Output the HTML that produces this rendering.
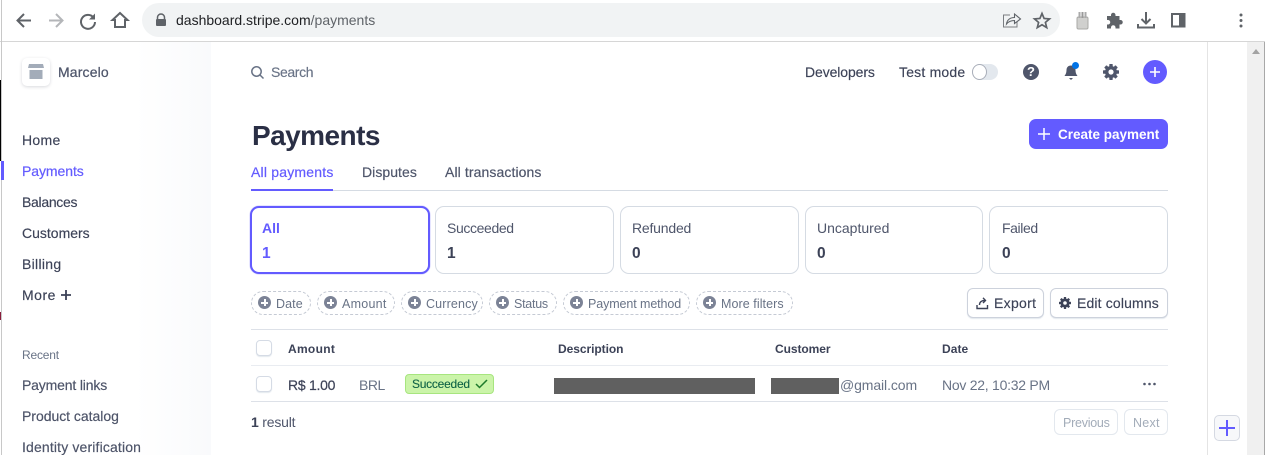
<!DOCTYPE html>
<html><head><meta charset="utf-8"><style>
*{box-sizing:border-box}
html,body{margin:0;padding:0;width:1265px;height:455px;overflow:hidden;background:#fff}
body{position:relative;font-family:"Liberation Sans",sans-serif;font-size:14px;color:#3c4257}
.t{position:absolute;white-space:nowrap;line-height:18px;letter-spacing:.3px}
.b{position:absolute}
.n{color:#3c4257;left:22px;-webkit-text-stroke:.15px #3c4257}
.card{position:absolute;top:206px;height:68px;border:1px solid #d5dbe3;border-radius:9px;background:#fff}
.pill{position:absolute;top:291px;height:24px;border:1px dashed #c5cad4;border-radius:12px}
.pl{position:absolute;top:296px;width:13px;height:13px;border-radius:50%;background:#7c8396}
.pl:before{content:"";position:absolute;left:3px;top:5.5px;width:7px;height:2px;background:#fff}
.pl:after{content:"";position:absolute;left:5.5px;top:3px;width:2px;height:7px;background:#fff}
.pt{top:295px;font-size:12.5px;color:#697386;letter-spacing:.1px}
.btn{position:absolute;border:1px solid #cdd2dc;border-radius:6px;background:#fff}
.chk{position:absolute;left:256px;width:16px;height:16px;border:1px solid #d5dbe5;border-radius:4px;box-shadow:0 1px 1px #e3e8ee;background:#fff}
.num{font-weight:700;font-size:15.5px;top:245px;letter-spacing:0}
svg{position:absolute;overflow:visible}
</style></head><body>
<!-- browser frame -->
<div class="b" style="left:0;top:41px;width:1265px;height:1px;background:#d6d6d6"></div>
<div class="b" style="left:1px;top:0;width:1px;height:455px;background:#c8c8c8"></div>
<div class="b" style="left:0;top:80px;width:1px;height:81px;background:#000"></div>
<div class="b" style="left:0;top:312px;width:1px;height:8px;background:#8a1d3c"></div>
<div class="b" style="left:142px;top:3px;width:918px;height:34px;border-radius:17px;background:#f1f3f4"></div>
<svg style="left:0;top:0" width="140" height="40" fill="none">
<path d="M31 20.5H18M24 14l-6.500 6.500L24 27" stroke="#5f6368" stroke-width="2"/>
<path d="M49 20.500H62M56 14l6.500 6.500L56 27" stroke="#b4b6b9" stroke-width="2"/>
<path d="M93.500 17.500A7 7 0 1 0 95 22" stroke="#5f6368" stroke-width="2"/><path d="M95 13.500v6h-6z" fill="#5f6368"/>
<path d="M120 13l-7.500 7H115v7h10v-7h2.500z" stroke="#5f6368" stroke-width="2" stroke-linejoin="miter"/>
</svg>
<svg style="left:155px;top:13px" width="12" height="14"><path d="M2.500 6V4.500a3.500 3.500 0 0 1 7 0V6" fill="none" stroke="#5f6368" stroke-width="1.500"/><rect x="1" y="6" width="10" height="7" rx="1" fill="#5f6368"/></svg>
<div class="t" style="left:176px;top:11px;font-size:14px;letter-spacing:0;color:#202124">dashboard.stripe.com<span style="color:#5f6368">/payments</span></div>
<svg style="left:1000px;top:10px" width="50" height="20" fill="none">
<path d="M10 5H3.500v12H17v-5" stroke="#7a7d81" stroke-width="1"/><path d="M6.500 14c.5-4 3.500-6.500 8-6.500V4l6 5-6 4.500V10.500c-3.500 0-6 1-8 3.500z" stroke="#5f6368" stroke-width="1.100"/>
<path d="M42 3.500l2.100 5 5.400.4-4.100 3.500 1.300 5.200-4.700-2.800-4.700 2.800 1.300-5.200-4.100-3.500 5.400-.4z" stroke="#5f6368" stroke-width="1.700"/>
</svg>
<svg style="left:1074px;top:11px" width="16" height="18"><rect x="3" y="6" width="11" height="12" rx="1.500" fill="#d0d0ce" stroke="#aaaaa7"/><rect x="4.500" y="1" width="2" height="6" fill="#aaa"/><rect x="7.500" y="1" width="2" height="6" fill="#999"/><rect x="10.500" y="1" width="2" height="6" fill="#aaa"/></svg>
<svg style="left:1105px;top:11px" width="18" height="18"><path d="M2 5h4V4a2.200 2.200 0 0 1 4.500 0v1h4v4h1a2.200 2.200 0 0 1 0 4.500h-1v4h-4v-1a2.200 2.200 0 0 0-4.500 0v1H2v-4h1a2.200 2.200 0 0 0 0-4.500H2z" fill="#5f6368"/></svg>
<svg style="left:1137px;top:11px" width="18" height="18" fill="none" stroke="#5f6368" stroke-width="2"><path d="M9 1v11M4.500 8L9 12.500 13.500 8M1 13v3.500h16V13"/></svg>
<svg style="left:1171px;top:13px" width="15" height="15"><rect x="1" y="1" width="12.500" height="12.500" fill="none" stroke="#5f6368" stroke-width="2"/><rect x="8" y="1" width="6" height="13" fill="#5f6368"/></svg>
<svg style="left:1238px;top:13px" width="6" height="16"><circle cx="3" cy="2" r="1.500" fill="#5f6368"/><circle cx="3" cy="7.500" r="1.500" fill="#5f6368"/><circle cx="3" cy="13" r="1.500" fill="#5f6368"/></svg>
<!-- right rail / scrollbar -->
<div class="b" style="left:1207px;top:42px;width:1px;height:413px;background:#e4e4e4"></div>
<div class="b" style="left:1247px;top:42px;width:17px;height:413px;background:#f0f0f0"></div>
<div class="b" style="left:1264px;top:42px;width:1px;height:413px;background:#a8a8a8"></div>
<svg style="left:1252px;top:49px" width="8" height="5"><path d="M0 5L4 0l4 5z" fill="#a3a3a3"/></svg>
<div class="b" style="left:1214px;top:415px;width:26px;height:26px;border:1px solid #d5d9e2;border-radius:5px;background:#f7f8fa"></div>
<svg style="left:1219px;top:420px" width="16" height="16"><path d="M0 8h16M8 0v16" stroke="#635bff" stroke-width="2"/></svg>
<!-- sidebar -->
<div class="b" style="left:60px;top:42px;width:151px;height:413px;background:linear-gradient(90deg,#fff 0%,#fff 50%,#f9fafc 100%)"></div>
<div class="b" style="left:22px;top:58px;width:28px;height:28px;border-radius:5px;background:#fff;box-shadow:0 1px 3px rgba(60,66,87,.2)"></div>
<svg style="left:28px;top:64px" width="16" height="16"><path d="M1 0h14l1 4H0z" fill="#a3acb9"/><rect x="1.500" y="6" width="13" height="9" fill="#a3acb9"/></svg>
<div class="t" style="left:58px;top:63px;color:#4f566b;letter-spacing:.15px;-webkit-text-stroke:.25px #4f566b">Marcelo</div>
<div class="t n" style="top:131px">Home</div>
<div class="b" style="left:1px;top:161px;width:3px;height:19px;background:#635bff"></div>
<div class="t n" style="top:162px;color:#635bff;letter-spacing:-.07px;-webkit-text-stroke:.2px #635bff">Payments</div>
<div class="t n" style="top:193px;letter-spacing:-.3px">Balances</div>
<div class="t n" style="top:224px;letter-spacing:0">Customers</div>
<div class="t n" style="top:255px">Billing</div>
<div class="t n" style="top:286px;letter-spacing:.5px">More</div>
<svg style="left:61px;top:290px" width="10" height="10"><path d="M0 5h10M5 0v10" stroke="#3c4257" stroke-width="1.800"/></svg>
<div class="t" style="left:22px;top:346px;font-size:12px;color:#697386;letter-spacing:-.2px">Recent</div>
<div class="t n" style="top:376px;color:#4f566b;letter-spacing:-.16px">Payment links</div>
<div class="t n" style="top:407px;color:#4f566b;letter-spacing:-.03px">Product catalog</div>
<div class="t n" style="top:438px;color:#4f566b;letter-spacing:.15px">Identity verification</div>
<!-- top bar -->
<svg style="left:251px;top:66px" width="13" height="13" fill="none" stroke="#697386" stroke-width="1.500"><circle cx="5.500" cy="5.500" r="4.700"/><path d="M9 9l3.500 3.500"/></svg>
<div class="t" style="left:271px;top:63px;color:#697386;letter-spacing:-.37px;-webkit-text-stroke:.15px #697386">Search</div>
<div class="t" style="left:805px;top:63px;color:#3c4257;letter-spacing:-.1px;-webkit-text-stroke:.15px #3c4257">Developers</div>
<div class="t" style="left:899px;top:63px;color:#3c4257;letter-spacing:.2px;-webkit-text-stroke:.15px #3c4257">Test mode</div>
<div class="b" style="left:972px;top:64px;width:26px;height:16px;border-radius:8px;background:#e3e8ee"></div>
<div class="b" style="left:972px;top:64px;width:15px;height:16px;border-radius:50%;background:#fff;border:1px solid #a9aeb9"></div>
<div class="b" style="left:1023px;top:64px;width:16px;height:16px;border-radius:50%;background:#4f566b"></div>
<div class="t" style="left:1023px;top:63px;width:16px;text-align:center;color:#fff;font-weight:700;font-size:13px;letter-spacing:0">?</div>
<svg style="left:1064px;top:64px" width="15" height="17"><path d="M7 1.500c-3 0-4.500 2-4.500 4.500 0 3-1 4.500-2 6h13c-1-1.500-2-3-2-6 0-2.500-1.500-4.500-4.500-4.500z" fill="#4f566b"/><path d="M5 14h4l-2 2z" fill="#4f566b"/></svg>
<div class="b" style="left:1072px;top:62px;width:7px;height:7px;border-radius:50%;background:#0073e6"></div>
<svg style="left:1103px;top:64px" width="16" height="16"><g fill="#4f566b"><circle cx="8" cy="8" r="6"/><rect x="6.300" y="0" width="3.400" height="16" rx=".6"/><rect x="6.300" y="0" width="3.400" height="16" rx=".6" transform="rotate(45 8 8)"/><rect x="6.300" y="0" width="3.400" height="16" rx=".6" transform="rotate(90 8 8)"/><rect x="6.300" y="0" width="3.400" height="16" rx=".6" transform="rotate(135 8 8)"/></g><circle cx="8" cy="8" r="2.600" fill="#fff"/></svg>
<div class="b" style="left:1143px;top:60px;width:24px;height:24px;border-radius:50%;background:#635bff"></div>
<svg style="left:1150px;top:67px" width="10" height="10"><path d="M0 5h10M5 0v10" stroke="#fff" stroke-width="1.600"/></svg>
<!-- header -->
<div class="t" style="left:252px;top:119px;font-size:28px;line-height:34px;font-weight:700;color:#2a2f45;letter-spacing:-.55px">Payments</div>
<div class="b" style="left:1029px;top:119px;width:139px;height:30px;border-radius:7px;background:#635bff"></div>
<svg style="left:1038px;top:128px" width="12" height="12"><path d="M0 6h12M6 0v12" stroke="#fff" stroke-width="1.500"/></svg>
<div class="t" style="left:1058px;top:126px;color:#fff;font-weight:700;font-size:13.500px;letter-spacing:0">Create payment</div>
<div class="t" style="left:251px;top:163px;color:#635bff;letter-spacing:.2px;-webkit-text-stroke:.2px #635bff">All payments</div>
<div class="t" style="left:362px;top:163px;color:#4f566b;letter-spacing:.05px;-webkit-text-stroke:.2px #4f566b">Disputes</div>
<div class="t" style="left:445px;top:163px;color:#4f566b;letter-spacing:.1px;-webkit-text-stroke:.2px #4f566b">All transactions</div>
<div class="b" style="left:251px;top:190px;width:917px;height:1px;background:#d5dbe3"></div>
<div class="b" style="left:251px;top:189px;width:82px;height:2px;background:#635bff"></div>
<!-- cards -->
<div class="card" style="left:250px;width:180px;border:2px solid #635bff;box-shadow:0 0 1px #635bff"></div>
<div class="card" style="left:435px;width:179px"></div>
<div class="card" style="left:620px;width:179px"></div>
<div class="card" style="left:805px;width:178px"></div>
<div class="card" style="left:989px;width:179px"></div>
<div class="t" style="left:262px;top:219px;color:#635bff;font-weight:700;letter-spacing:0">All</div>
<div class="t num" style="left:262px;color:#635bff">1</div>
<div class="t" style="left:447px;top:219px;color:#4f566b;letter-spacing:-.37px">Succeeded</div>
<div class="t num" style="left:447px">1</div>
<div class="t" style="left:632px;top:219px;color:#4f566b;letter-spacing:-.2px">Refunded</div>
<div class="t num" style="left:632px">0</div>
<div class="t" style="left:817px;top:219px;color:#4f566b;letter-spacing:0">Uncaptured</div>
<div class="t num" style="left:817px">0</div>
<div class="t" style="left:1002px;top:219px;color:#4f566b;letter-spacing:-.4px">Failed</div>
<div class="t num" style="left:1002px">0</div>
<!-- filters -->
<div class="pill" style="left:251px;width:60px"></div><div class="pl" style="left:258px"></div><div class="t pt" style="left:276px">Date</div>
<div class="pill" style="left:317px;width:78px"></div><div class="pl" style="left:324px"></div><div class="t pt" style="left:342px;letter-spacing:.25px">Amount</div>
<div class="pill" style="left:401px;width:82px"></div><div class="pl" style="left:408px"></div><div class="t pt" style="left:426px;letter-spacing:.15px">Currency</div>
<div class="pill" style="left:489px;width:68px"></div><div class="pl" style="left:496px"></div><div class="t pt" style="left:514px;letter-spacing:-.25px">Status</div>
<div class="pill" style="left:563px;width:127px"></div><div class="pl" style="left:570px"></div><div class="t pt" style="left:588px;letter-spacing:-.1px">Payment method</div>
<div class="pill" style="left:696px;width:97px"></div><div class="pl" style="left:703px"></div><div class="t pt" style="left:721px;letter-spacing:.07px">More filters</div>
<div class="btn" style="left:967px;top:288px;width:77px;height:30px;box-shadow:0 1px 1px #e3e8ee"></div>
<svg style="left:976px;top:297px" width="13" height="13" fill="none" stroke="#3c4257" stroke-width="1.400"><path d="M1 8v3.500h10.500V8M3.500 8c0-3 2-4.500 5-4.500M7 .8l2.500 2.700L7 6"/></svg>
<div class="t" style="left:994px;top:294px;color:#3c4257;-webkit-text-stroke:.15px #3c4257">Export</div>
<div class="btn" style="left:1050px;top:288px;width:118px;height:30px;box-shadow:0 1px 1px #e3e8ee"></div>
<svg style="left:1059px;top:297px" width="12" height="12"><g fill="#3c4257"><circle cx="6" cy="6" r="4.500"/><rect x="4.800" y="0" width="2.400" height="12" rx=".5"/><rect x="4.800" y="0" width="2.400" height="12" rx=".5" transform="rotate(45 6 6)"/><rect x="4.800" y="0" width="2.400" height="12" rx=".5" transform="rotate(90 6 6)"/><rect x="4.800" y="0" width="2.400" height="12" rx=".5" transform="rotate(135 6 6)"/></g><circle cx="6" cy="6" r="1.800" fill="#fff"/></svg>
<div class="t" style="left:1077px;top:294px;color:#3c4257;letter-spacing:.15px;-webkit-text-stroke:.15px #3c4257">Edit columns</div>
<!-- table -->
<div class="b" style="left:251px;top:329px;width:917px;height:1px;background:#dde1e8"></div>
<div class="b" style="left:251px;top:365px;width:917px;height:1px;background:#e9ecf1"></div>
<div class="b" style="left:251px;top:401px;width:917px;height:1px;background:#dde1e8"></div>
<div class="chk" style="top:340px"></div>
<div class="chk" style="top:376px"></div>
<div class="t" style="left:288px;top:340px;font-size:12px;font-weight:700;color:#3c4257">Amount</div>
<div class="t" style="left:558px;top:340px;font-size:12px;font-weight:700;color:#3c4257;letter-spacing:-.05px">Description</div>
<div class="t" style="left:775px;top:340px;font-size:12px;font-weight:700;color:#3c4257;letter-spacing:-.07px">Customer</div>
<div class="t" style="left:942px;top:340px;font-size:12px;font-weight:700;color:#3c4257;letter-spacing:.05px">Date</div>
<div class="t" style="left:288px;top:376px;color:#3c4257;letter-spacing:-.27px;-webkit-text-stroke:.2px #3c4257">R$ 1.00</div>
<div class="t" style="left:359px;top:376px;color:#697386;letter-spacing:-.5px">BRL</div>
<div class="b" style="left:405px;top:374px;width:89px;height:20px;border-radius:4px;background:#cbf4a9;border:1px solid #a7e57f"></div>
<div class="t" style="left:412px;top:375px;font-size:12px;color:#0e6245;letter-spacing:-.25px;-webkit-text-stroke:.1px #0e6245">Succeeded</div>
<svg style="left:475px;top:379px" width="13" height="10" fill="none"><path d="M1 5l3.500 3.500L12 1" stroke="#1e7a2c" stroke-width="1.500"/></svg>
<div class="b" style="left:554px;top:378px;width:201px;height:16px;background:#606060"></div>
<div class="b" style="left:771px;top:378px;width:68px;height:16px;background:#606060"></div>
<div class="t" style="left:840px;top:376px;color:#697386;letter-spacing:-.1px">@gmail.com</div>
<div class="t" style="left:942px;top:376px;color:#697386;letter-spacing:-.26px">Nov 22, 10:32 PM</div>
<svg style="left:1143px;top:382px" width="13" height="4"><g fill="#4f566b"><circle cx="1.500" cy="2" r="1.300"/><circle cx="6.500" cy="2" r="1.300"/><circle cx="11.500" cy="2" r="1.300"/></g></svg>
<div class="t" style="left:251px;top:413px;color:#4f566b;letter-spacing:-.2px"><b style="color:#3c4257">1</b> result</div>
<div class="btn" style="left:1054px;top:409px;width:64px;height:26px;border-color:#e3e8ee"></div>
<div class="t" style="left:1063px;top:414px;font-size:12.500px;color:#a3acb9;letter-spacing:-.25px">Previous</div>
<div class="btn" style="left:1124px;top:409px;width:44px;height:26px;border-color:#e3e8ee"></div>
<div class="t" style="left:1133px;top:414px;font-size:12.500px;color:#a3acb9;letter-spacing:.25px">Next</div>
</body></html>
